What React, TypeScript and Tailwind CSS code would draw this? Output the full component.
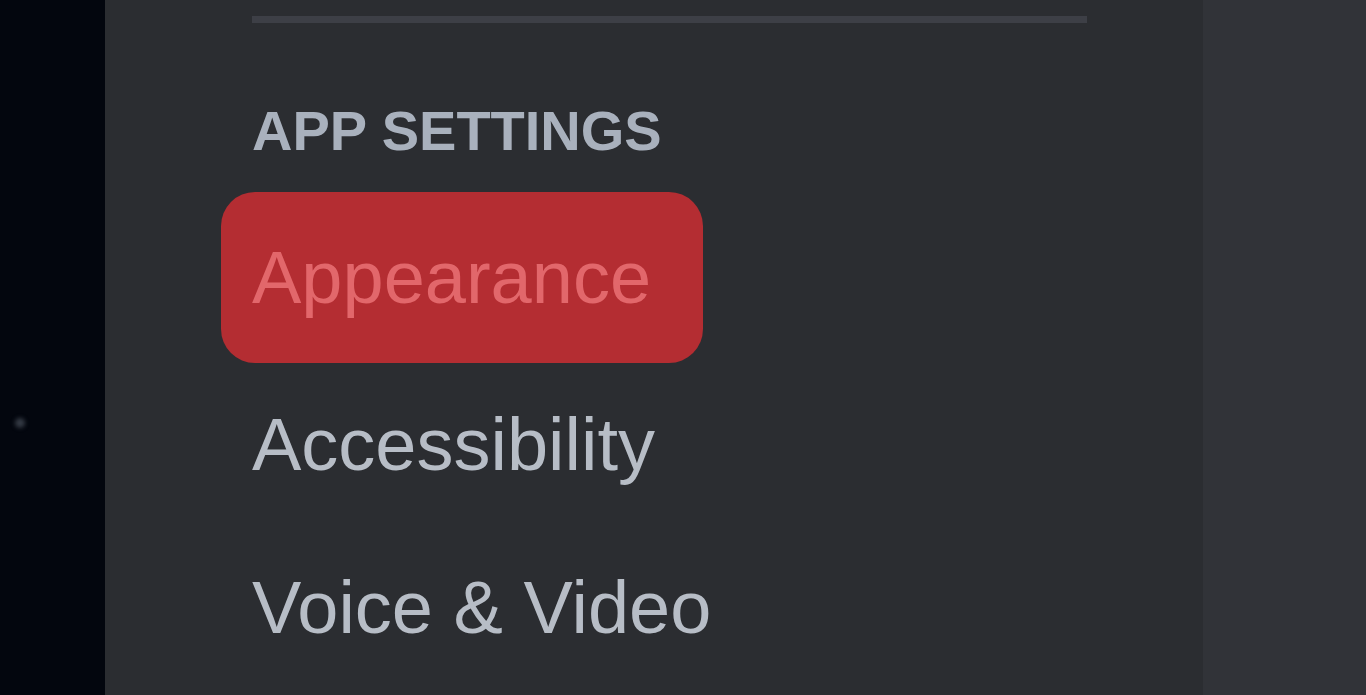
import React from 'react';

const items = ['Appearance', 'Accessibility', 'Voice & Video'];

const SidebarItem: React.FC<{ label: string; active?: boolean }> = ({ label, active }) => (
    <div
        className={
            active
                ? 'h-[171px] flex items-center pl-[31px] w-[482px] rounded-[34px] bg-[#b42d32] text-[#e2676b]'
                : 'h-[163px] flex items-center pl-[31px] text-[#b7bdc6]'
        }
    >
        <span className="text-[74px] leading-none whitespace-nowrap">{label}</span>
    </div>
);

export default function App() {
    return (
        <div className="flex h-[695px] w-full overflow-hidden font-['Liberation_Sans',Arial,sans-serif]">
            <div className="relative w-[105px] shrink-0 bg-[#03060e]">
                <div className="absolute left-[15px] top-[418px] h-[10px] w-[10px] rounded-full bg-[#343a44] blur-[2px]" />
            </div>
            <div className="flex-1 bg-[#2b2d31] pl-[116px] pr-[116px]">
                <div className="ml-[31px] mt-[16px] h-[7px] bg-[#3d3f46]" />
                <h2 className="ml-[31px] mt-[80px] text-[56px] font-bold leading-none text-[#a9b1bd]">APP SETTINGS</h2>
                <div className="mt-[33px] flex flex-col">
                    {items.map((label, i) => (
                        <SidebarItem key={label} label={label} active={i === 0} />
                    ))}
                </div>
            </div>
            <div className="w-[163px] shrink-0 bg-[#313338]" />
        </div>
    );
}
